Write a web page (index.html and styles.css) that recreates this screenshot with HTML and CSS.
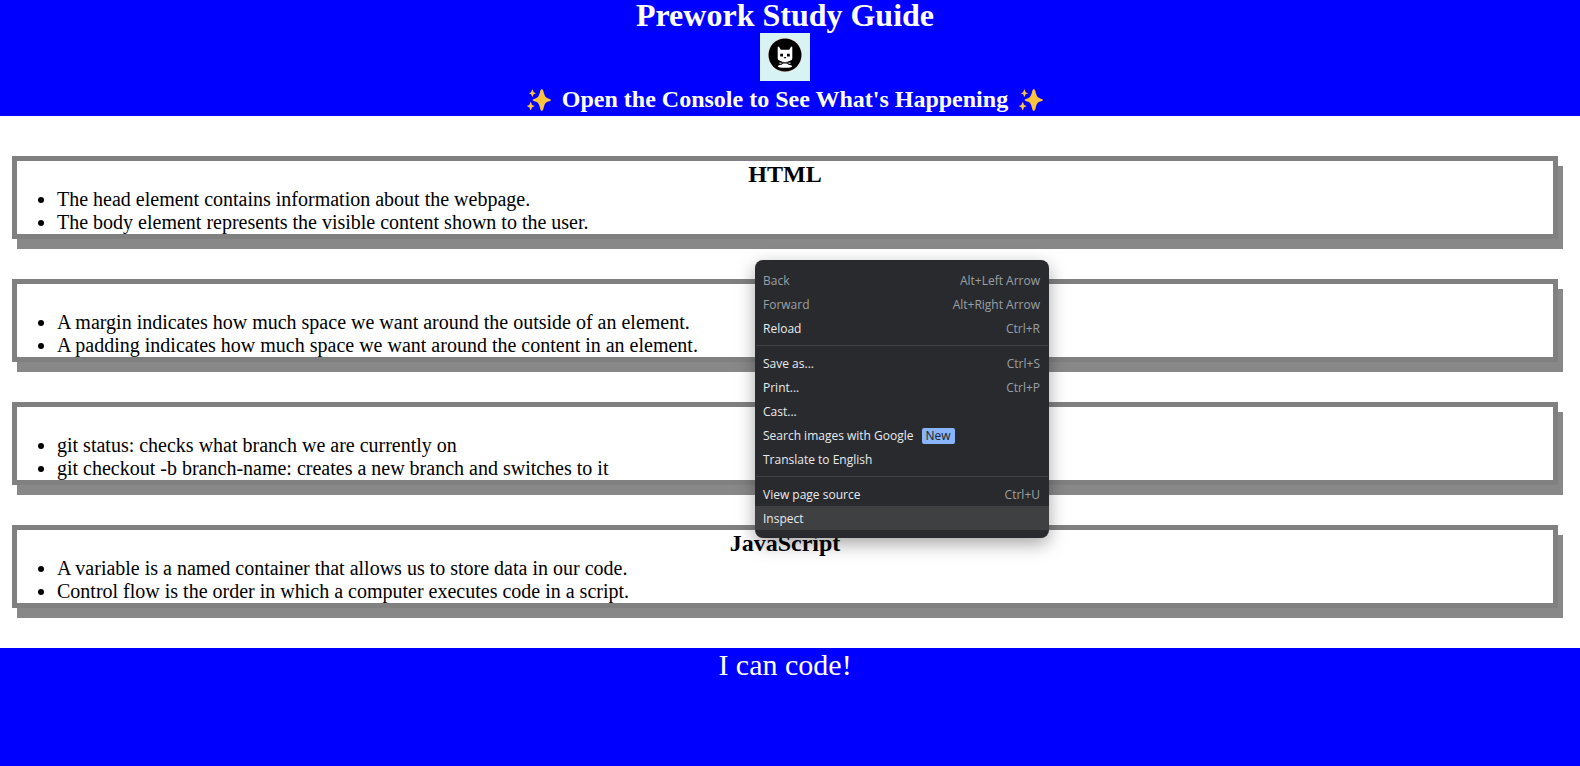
FILE: index.html
```html
<!DOCTYPE html>
<html lang="en">
<head>
  <meta charset="UTF-8">
  <meta name="viewport" content="width=device-width, initial-scale=1">
  <title>Prework Study Guide</title>
  <link rel="stylesheet" href="styles.css">
</head>
<body>
  <svg class="defs" aria-hidden="true">
    <symbol id="sparkles" viewBox="0 0 24 22">
      <path fill="#fcc43c" d="M14.800 0C16 0 16.500 2.500 17 4.500 18 7.800 19 8.700 21.200 9.400 23 10 24 10.300 24 11s-1 1-2.800 1.600C19 13.300 18 14.200 17 17.500 16.500 19.500 16 22 14.800 22s-1.700-2.500-2.200-4.500c-1-3.300-2-4.200-4.200-4.900C6.600 12 5.600 11.700 5.600 11s1-1 2.800-1.600c2.200-.7 3.200-1.600 4.200-4.900C13.100 2.500 13.600 0 14.800 0z"/>
      <path fill="#fcc43c" d="M5.400.6C6 .6 6.200 2.800 6.700 3.200 7.200 3.600 8.800 3.700 8.800 4.200S7.200 4.800 6.700 5.300C6.200 5.700 6 7.800 5.400 7.800S4.600 5.700 4.100 5.300C3.600 4.800 2.200 4.700 2.200 4.200s1.400-.6 1.900-1S4.800.6 5.400.6zM3.700 13c.6 0 .9 2.500 1.400 3s2.400.5 2.400 1.100-1.900.7-2.400 1.200-.8 3-1.400 3-.9-2.500-1.400-3S0 17.700 0 17.100 1.800 16.500 2.300 16s.8-3 1.400-3z"/>
    </symbol>
  </svg>

  <header class="banner">
    <h1 class="title">Prework Study Guide</h1>
    <svg class="logo" viewBox="0 0 50 48" role="img" aria-label="Cat logo">
      <path fill="#d8f3f4" d="M0 0h50v48H0z"/>
      <circle cx="25" cy="22" r="17.300" fill="#f4e5e0"/>
      <circle cx="25" cy="22" r="16.500"/>
      <path fill="#fff" d="M18 13.500q.8-.1 1.300.8l1.500 2.400h8.400l1.500-2.400q.5-.9 1.300-.8.300.3.300 1.500v10.500q0 1.600-1.700 2.100l-2.100.7-1 1h-5l-1-1-2.100-.7q-1.700-.5-1.700-2.100V15q0-1.200.3-1.500z"/>
      <path fill="#fff" d="M17.700 33.300q.5-1.300 3.800-1.500l1.500-1.300h4l1.500 1.300q3.300.2 3.800 1.500-.8 1.500-7.300 1.500t-7.300-1.500z"/>
      <path fill="#aaa" d="M19.500 29.500h2v1.600h-2zM28.500 29.500h2v1.600h-2z"/>
      <path d="M20.200 20.800h2.800v2.600h-2.800zM27 20.800h2.800v2.600H27zM23.600 24h2.800L25 25.700z"/>
      <path fill="#333" d="M22 28.800h1.500v1.400H22zM26.500 28.800H28v1.400h-1.500z"/>
    </svg>
    <h2 class="tagline">
      <svg class="sparkle" aria-hidden="true"><use href="#sparkles"/></svg>
      <span>Open the Console to See What's Happening</span>
      <svg class="sparkle" aria-hidden="true"><use href="#sparkles"/></svg>
    </h2>
  </header>

  <main class="topics">
    <section class="card">
      <h2>HTML</h2>
      <ul>
        <li>The head element contains information about the webpage.</li>
        <li>The body element represents the visible content shown to the user.</li>
      </ul>
    </section>
    <section class="card">
      <h2>CSS</h2>
      <ul>
        <li>A margin indicates how much space we want around the outside of an element.</li>
        <li>A padding indicates how much space we want around the content in an element.</li>
      </ul>
    </section>
    <section class="card">
      <h2>Git</h2>
      <ul>
        <li>git status: checks what branch we are currently on</li>
        <li>git checkout -b branch-name: creates a new branch and switches to it</li>
      </ul>
    </section>
    <section class="card">
      <h2>JavaScript</h2>
      <ul>
        <li>A variable is a named container that allows us to store data in our code.</li>
        <li>Control flow is the order in which a computer executes code in a script.</li>
      </ul>
    </section>
  </main>

  <footer class="footer">I can code!</footer>

  <div class="menu" role="menu">
    <button class="item" role="menuitem" disabled>Back<span class="keys">Alt+Left Arrow</span></button>
    <button class="item" role="menuitem" disabled>Forward<span class="keys">Alt+Right Arrow</span></button>
    <button class="item" role="menuitem">Reload<span class="keys">Ctrl+R</span></button>
    <hr class="separator">
    <button class="item" role="menuitem">Save as...<span class="keys">Ctrl+S</span></button>
    <button class="item" role="menuitem">Print...<span class="keys">Ctrl+P</span></button>
    <button class="item" role="menuitem">Cast...</button>
    <button class="item" role="menuitem">Search images with Google<span class="badge">New</span></button>
    <button class="item" role="menuitem">Translate to English</button>
    <hr class="separator">
    <button class="item" role="menuitem">View page source<span class="keys">Ctrl+U</span></button>
    <button class="item active" role="menuitem">Inspect</button>
  </div>
</body>
</html>
```

FILE: styles.css
```css
* {
  box-sizing: border-box;
  margin: 0;
  padding: 0;
}

body {
  display: flex;
  flex-direction: column;
  min-height: 100vh;
  background: #fff;
  color: #000;
  font-family: "Liberation Serif", "Times New Roman", serif;
}

.defs {
  position: absolute;
  width: 0;
  height: 0;
}

.banner {
  display: flex;
  flex-direction: column;
  align-items: center;
  padding: 0 10px 3px 0;
  background: #00f;
  color: #fff;
}

.title {
  padding-bottom: 3px;
  font-size: 32px;
  line-height: 30px;
}

.logo {
  width: 50px;
  height: 48px;
  margin-bottom: 5px;
}

.tagline {
  display: flex;
  align-items: center;
  gap: 11px;
  font-size: 24px;
  line-height: 27px;
}

.sparkle {
  width: 24px;
  height: 22px;
}

.topics {
  display: flex;
  flex-direction: column;
  gap: 40px;
  padding: 40px 22px 40px 12px;
}

.card {
  border: 5px solid #808080;
  box-shadow: 5px 10px #888;
}

.card h2 {
  font-size: 24px;
  line-height: 27px;
  text-align: center;
}

.card ul {
  padding-left: 40px;
  font-size: 20px;
  line-height: 23px;
}

.footer {
  flex: 1;
  padding-right: 10px;
  background: #00f;
  color: #fff;
  font-size: 30px;
  line-height: 34px;
  text-align: center;
}

.menu {
  position: absolute;
  top: 260px;
  left: 755px;
  width: 294px;
  padding: 8px 0;
  border-radius: 8px;
  background: #292a2d;
  box-shadow: 0 6px 18px rgba(0, 0, 0, 0.35);
}

.item {
  display: flex;
  align-items: center;
  width: 100%;
  height: 24px;
  padding: 2px 9px 0 8px;
  border: 0;
  background: transparent;
  color: #e8eaed;
  font: 12px/16px "Open Sans", "Noto Sans", sans-serif;
  text-align: left;
}

.item:disabled,
.keys {
  color: #9aa0a6;
}

.keys {
  margin-left: auto;
}

.active {
  background: #3f4042;
}

.badge {
  margin-left: 8px;
  padding: 0 4px;
  border-radius: 2px;
  background: #8ab4f8;
  color: #202124;
}

.separator {
  height: 1px;
  margin: 5px 1px;
  border: 0;
  background: #3f4145;
}
```
